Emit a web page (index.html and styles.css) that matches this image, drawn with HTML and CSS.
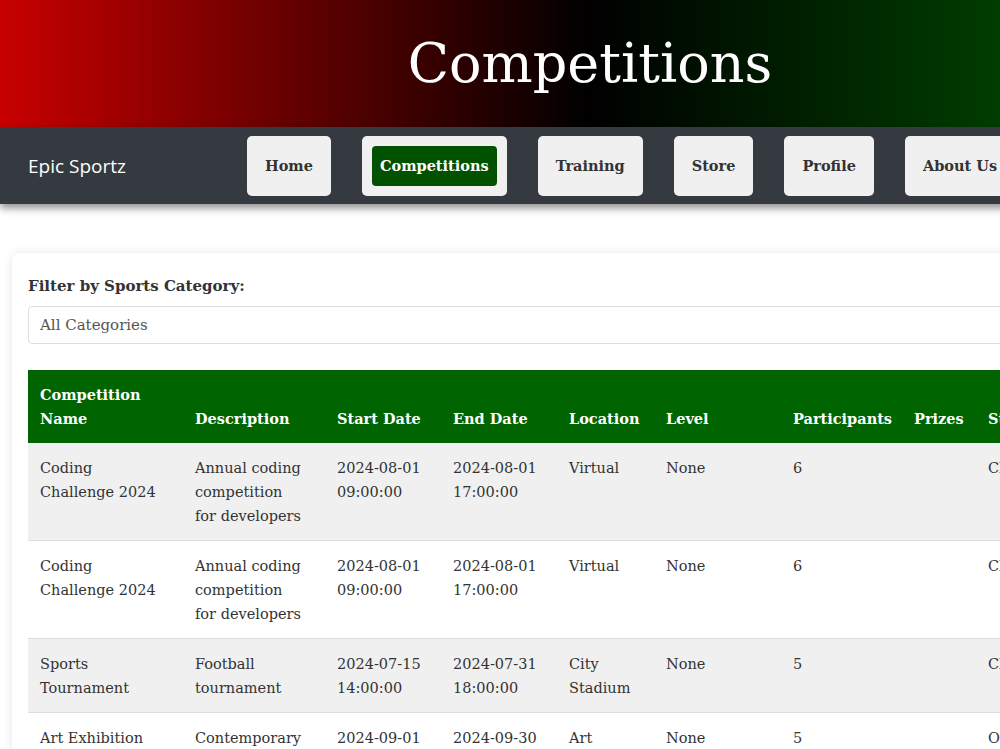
FILE: index.html
```html
<!DOCTYPE html>
<html lang="en">
<head>
    <meta charset="UTF-8">
    <meta name="viewport" content="width=device-width, initial-scale=1.0">
    <link rel="stylesheet" href="styles.css">
    <title>Competitions - Epic Sportz</title>
</head>
<body>
<div class="page">
    <header class="banner">
        <h1>Competitions</h1>
    </header>

    <nav class="topnav">
        <span class="brand">Epic Sportz</span>
        <ul class="menu">
            <li><a href="#">Home</a></li>
            <li><a href="#" class="active">Competitions</a></li>
            <li><a href="#">Training</a></li>
            <li><a href="#">Store</a></li>
            <li><a href="#">Profile</a></li>
            <li><a href="#">About Us</a></li>
            <li><a href="#">Logout</a></li>
        </ul>
    </nav>

    <main class="content">
        <section class="card">
            <label class="filter-label" for="category">Filter by Sports Category:</label>
            <select id="category" class="filter-select">
                <option>All Categories</option>
                <option>Coding</option>
                <option>Football</option>
                <option>Art</option>
            </select>

            <table class="comp-table">
                <colgroup>
                    <col style="width:155px">
                    <col style="width:142px">
                    <col style="width:116px">
                    <col style="width:116px">
                    <col style="width:97px">
                    <col style="width:127px">
                    <col style="width:121px">
                    <col style="width:74px">
                    <col style="width:110px">
                    <col style="width:120px">
                </colgroup>
                <thead>
                    <tr>
                        <th>Competition Name</th>
                        <th>Description</th>
                        <th>Start Date</th>
                        <th>End Date</th>
                        <th>Location</th>
                        <th>Level</th>
                        <th>Participants</th>
                        <th>Prizes</th>
                        <th>Status</th>
                        <th>Action</th>
                    </tr>
                </thead>
                <tbody>
                    <tr>
                        <td>Coding Challenge 2024</td>
                        <td class="desc">Annual coding competition for developers</td>
                        <td>2024-08-01 09:00:00</td>
                        <td>2024-08-01 17:00:00</td>
                        <td>Virtual</td>
                        <td>None</td>
                        <td>6</td>
                        <td></td>
                        <td>Closed</td>
                        <td></td>
                    </tr>
                    <tr>
                        <td>Coding Challenge 2024</td>
                        <td class="desc">Annual coding competition for developers</td>
                        <td>2024-08-01 09:00:00</td>
                        <td>2024-08-01 17:00:00</td>
                        <td>Virtual</td>
                        <td>None</td>
                        <td>6</td>
                        <td></td>
                        <td>Closed</td>
                        <td></td>
                    </tr>
                    <tr>
                        <td>Sports Tournament</td>
                        <td class="desc">Football tournament</td>
                        <td>2024-07-15 14:00:00</td>
                        <td>2024-07-31 18:00:00</td>
                        <td>City Stadium</td>
                        <td>None</td>
                        <td>5</td>
                        <td></td>
                        <td>Closed</td>
                        <td></td>
                    </tr>
                    <tr>
                        <td>Art Exhibition</td>
                        <td class="desc">Contemporary art exhibition</td>
                        <td>2024-09-01 10:00:00</td>
                        <td>2024-09-30 18:00:00</td>
                        <td>Art Gallery</td>
                        <td>None</td>
                        <td>5</td>
                        <td></td>
                        <td>Open</td>
                        <td></td>
                    </tr>
                </tbody>
            </table>
        </section>
    </main>
</div>
</body>
</html>
```

FILE: styles.css
```css
body {
    margin: 0;
    font-family: "DejaVu Serif", "Liberation Serif", serif;
    color: #333;
    background-color: #fff;
}

.page {
    width: 1180px;
}

/* banner */
.banner {
    height: 127px;
    display: flex;
    align-items: center;
    justify-content: center;
    background: linear-gradient(to right, #c80000, #000 50%, #005800);
}

.banner h1 {
    margin: 0;
    color: #fff;
    font-family: "DejaVu Serif", serif;
    font-weight: normal;
    font-size: 54px;
}

/* nav */
.topnav {
    height: 77px;
    display: flex;
    align-items: center;
    padding-left: 28px;
    background-color: #343a40;
    box-shadow: 0 4px 8px rgba(0, 0, 0, 0.45);
}

.brand {
    width: 219px;
    color: #fff;
    font-family: "Open Sans", sans-serif;
    font-size: 19px;
}

.menu {
    display: flex;
    gap: 31px;
    margin: 0;
    padding: 0;
    list-style: none;
}

.menu li {
    padding: 10px;
    background-color: #f0f0f0;
    border-radius: 5px;
}

.menu a {
    display: block;
    padding: 8px;
    line-height: 24px;
    font-size: 14.5px;
    font-weight: bold;
    color: #333;
    text-decoration: none;
    border-radius: 4px;
}

.menu a.active {
    background-color: #005200;
    color: #fff;
}

/* content */
.content {
    padding: 49px 0 0 12px;
}

.card {
    padding: 21px 16px 20px;
    background-color: #fff;
    border-radius: 8px;
    box-shadow: 0 0 10px rgba(0, 0, 0, 0.1);
}

.filter-label {
    display: block;
    margin-bottom: 8px;
    font-size: 15px;
    font-weight: bold;
    line-height: 24px;
    color: #333;
}

.filter-select {
    display: block;
    width: 100%;
    height: 38px;
    padding: 0 11px;
    font-family: "DejaVu Serif", serif;
    font-size: 15px;
    color: #555;
    background-color: #fff;
    border: 1px solid #ddd;
    border-radius: 4px;
    appearance: none;
}

.comp-table {
    margin-top: 26px;
    table-layout: fixed;
    border-collapse: collapse;
    width: 1178px;
}

.comp-table th,
.comp-table td {
    padding: 13px 12px 12px;
    text-align: left;
    vertical-align: top;
    font-size: 14.5px;
    line-height: 24px;
}

.comp-table th {
    vertical-align: bottom;
    background-color: #006400;
    color: #fff;
    font-weight: bold;
}

.comp-table td {
    border-bottom: 1px solid #ddd;
}

.comp-table td.desc {
    padding-right: 19px;
}

.comp-table tbody tr:nth-child(odd) {
    background-color: #f0f0f0;
}
```
